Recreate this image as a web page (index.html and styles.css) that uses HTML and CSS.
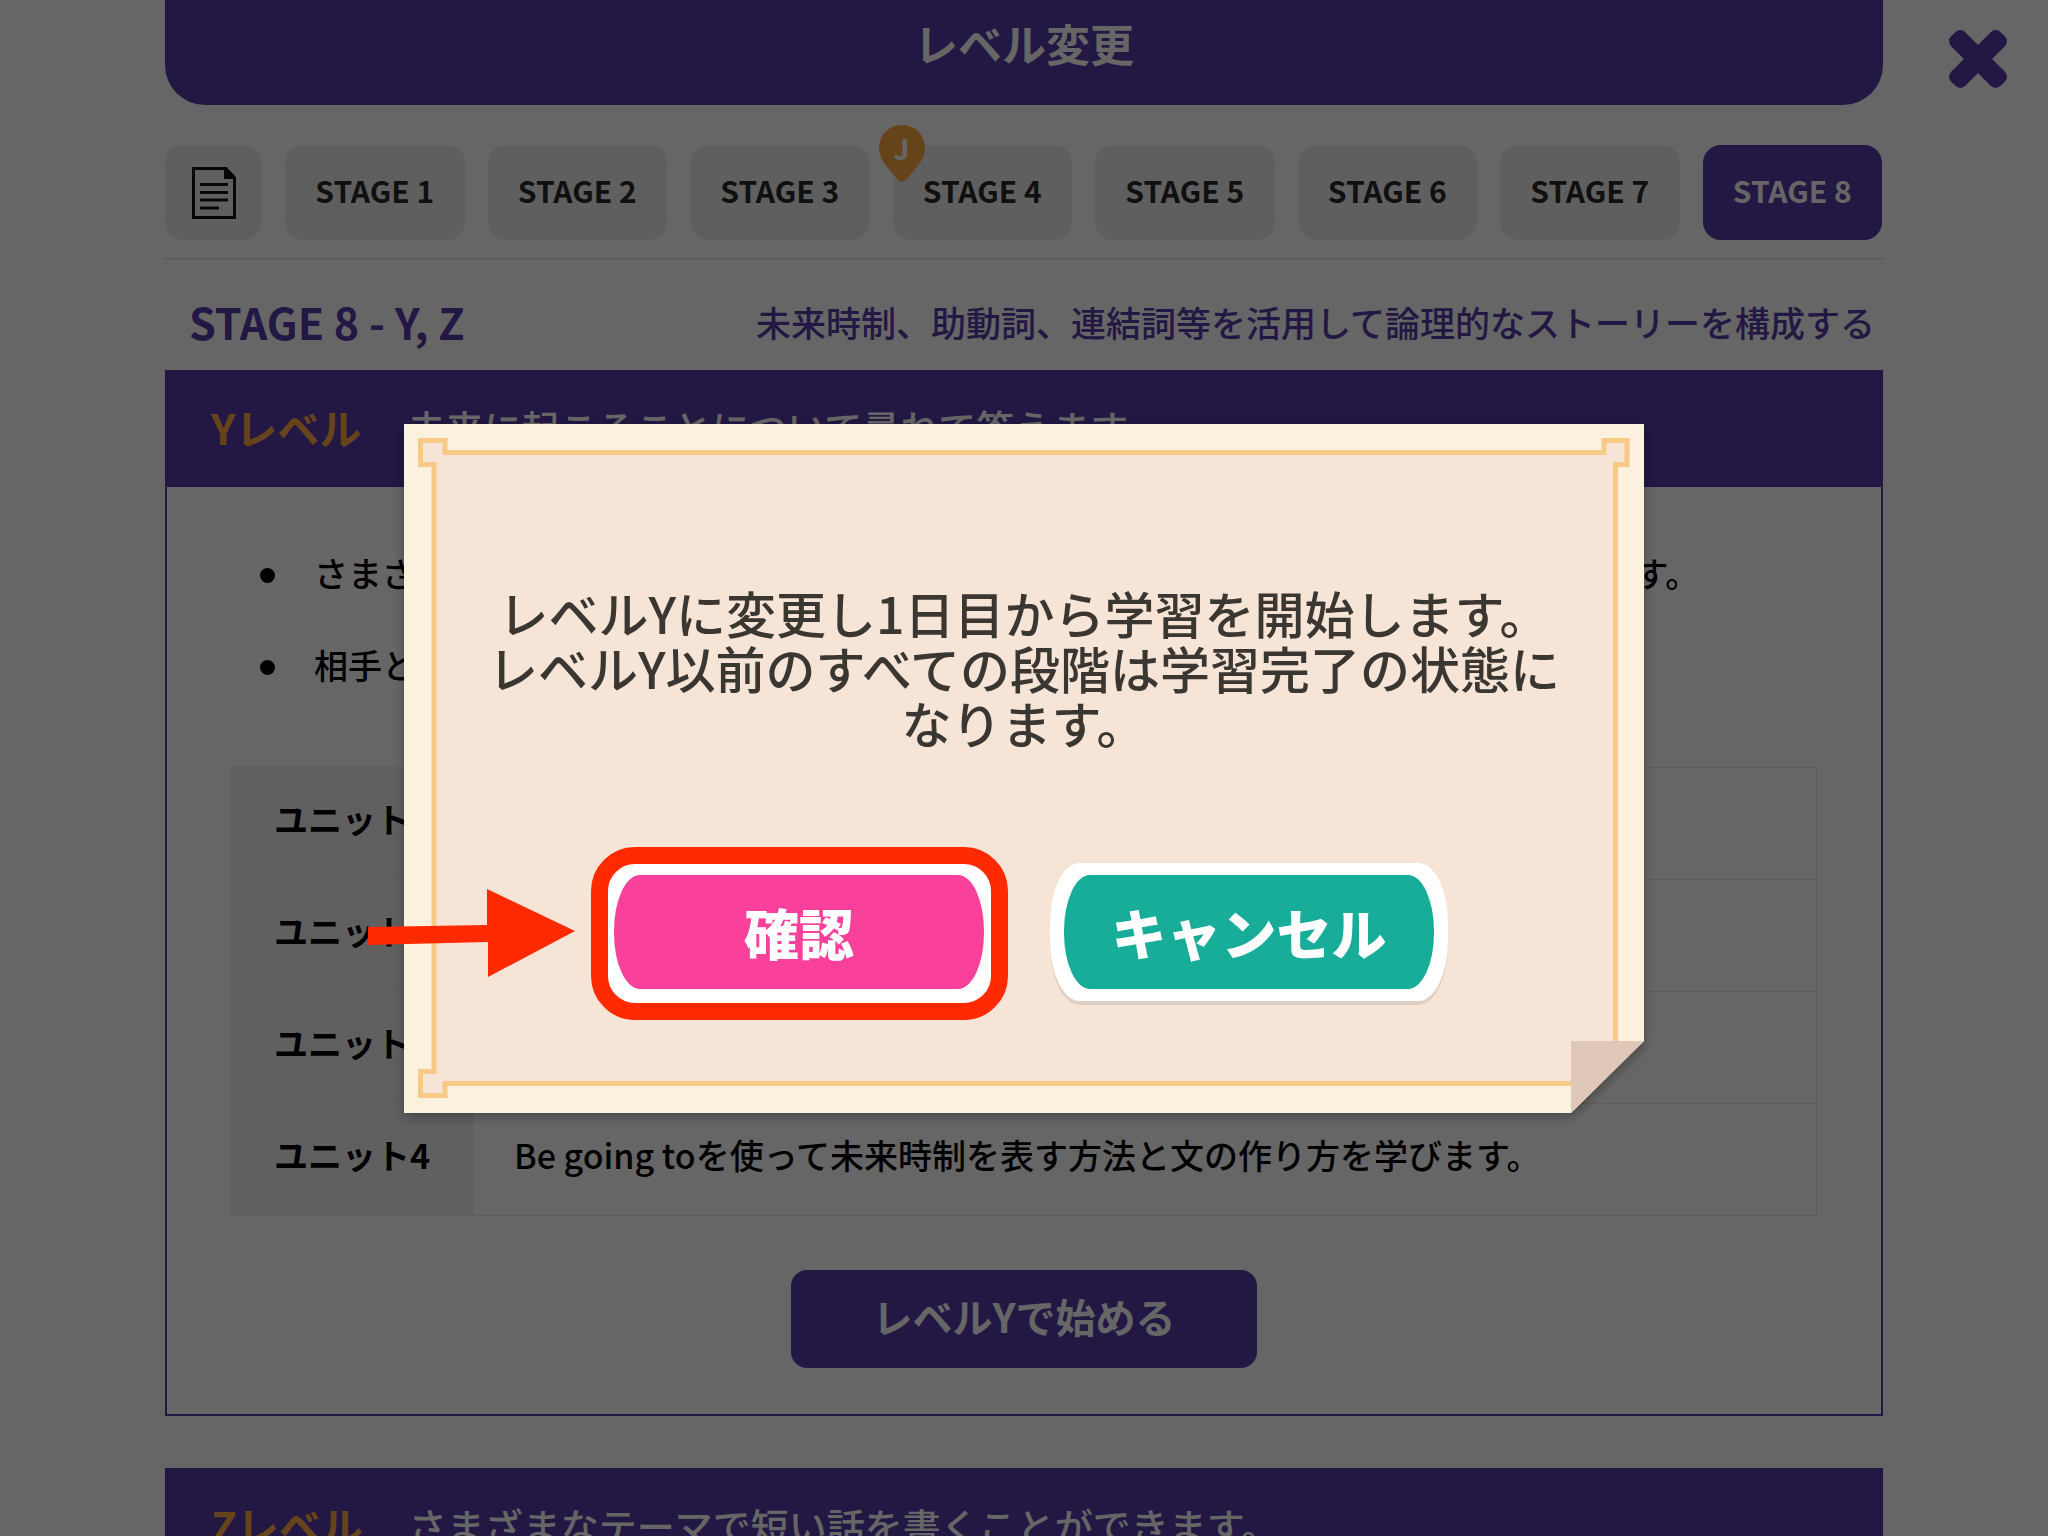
FILE: index.html
```html
<!DOCTYPE html>
<html lang="ja">
<head>
    <meta charset="UTF-8">
    <meta name="viewport" content="width=device-width, initial-scale=1.0">
    <title>レベル変更</title>
    <link rel="stylesheet" href="styles.css">
</head>
<body>
    <header class="top">
        <h1 class="top-title">レベル変更</h1>
        <button class="close" type="button" aria-label="閉じる">
            <svg width="60" height="60" viewBox="0 0 60 60" fill="#553ca8">
                <rect x="-5" y="20" width="70" height="20" rx="7" transform="rotate(45 30 30)"/>
                <rect x="-5" y="20" width="70" height="20" rx="7" transform="rotate(-45 30 30)"/>
            </svg>
        </button>
    </header>

    <main class="content">
        <nav class="tabs">
            <button class="tab tab-doc" type="button" aria-label="一覧">
                <svg width="44" height="52" viewBox="0 0 44 52">
                    <path d="M1.5 1.5H34L42.500 11V50.500H1.500Z" fill="none" stroke="#1a1206" stroke-width="3"/>
                    <path d="M32 1H35L44 10V12H32Z" fill="#1a1206"/>
                    <path d="M8 17.500H36M8 25.500H36M8 33H36M8 41H27" stroke="#1a1206" stroke-width="3"/>
                </svg>
            </button>
            <button class="tab" type="button">STAGE 1</button>
            <button class="tab" type="button">STAGE 2</button>
            <button class="tab" type="button">STAGE 3</button>
            <button class="tab" type="button">
                <span class="pin">
                    <svg width="48" height="58" viewBox="0 0 48 58"><path d="M24 0C37 0 47 10 47 23C47 34 39 42 29 54Q24 60 19 54C9 42 1 34 1 23C1 10 11 0 24 0Z" fill="#ffaa44"/></svg>
                    <span class="pin-text">J</span>
                </span>
                STAGE 4
            </button>
            <button class="tab" type="button">STAGE 5</button>
            <button class="tab" type="button">STAGE 6</button>
            <button class="tab" type="button">STAGE 7</button>
            <button class="tab active" type="button">STAGE 8</button>
        </nav>

        <div class="stage-head">
            <h2 class="stage-title">STAGE 8 - Y, Z</h2>
            <p class="stage-desc">未来時制、助動詞、連結詞等を活用して論理的なストーリーを構成する</p>
        </div>

        <section class="level">
            <div class="level-head">
                <h3 class="level-name">Yレベル</h3>
                <p class="level-desc">未来に起こることについて尋ねて答えます。</p>
            </div>
            <div class="level-body">
                <ul class="goals">
                    <li>さまざまな表現を使って、未来に起こることについて二人で尋ねて答えることができます。</li>
                    <li>相手と予定を話し合うことができます。</li>
                </ul>
                <table class="units">
                    <tr>
                        <th scope="row">ユニット1</th>
                        <td>willを使って未来の表し方を学びます。</td>
                    </tr>
                    <tr>
                        <th scope="row">ユニット2</th>
                        <td>未来のことを尋ねる方法を学びます。</td>
                    </tr>
                    <tr>
                        <th scope="row">ユニット3</th>
                        <td>未来のことを答える方法を学びます。</td>
                    </tr>
                    <tr>
                        <th scope="row">ユニット4</th>
                        <td>Be going toを使って未来時制を表す方法と文の作り方を学びます。</td>
                    </tr>
                </table>
                <button class="start" type="button">レベルYで始める</button>
            </div>
        </section>

        <section class="level">
            <div class="level-head">
                <h3 class="level-name">Zレベル</h3>
                <p class="level-desc">さまざまなテーマで短い話を書くことができます。</p>
            </div>
        </section>
    </main>

    <!-- 確認ダイアログ -->
    <div class="overlay">
        <div class="dialog" role="dialog" aria-modal="true" aria-labelledby="dialog-text">
            <svg class="paper" viewBox="0 0 1240 690" preserveAspectRatio="none">
                <path d="M0 0H1240V618L1167 690H0Z" fill="#fcf0df"/>
                <path d="M1211.500 618V40.500H1223V16.500H1200V28.500H41V16.500H16.500V40.500H30V648.500H16.500V672.500H41V660.500H1167" fill="#f6e4d6" stroke="#f8ca87" stroke-width="5"/>
                <path d="M1167 618H1240L1167 690Z" fill="#e0c8b8"/>
            </svg>
            <p class="dialog-text" id="dialog-text">レベルYに変更し1日目から学習を開始します。<br>レベルY以前のすべての段階は学習完了の状態に<br>なります。</p>
            <div class="dialog-buttons">
                <div class="marked">
                    <button class="choice confirm" type="button"><span>確認</span></button>
                    <span class="ring"></span>
                    <svg class="arrow" width="208" height="88" viewBox="0 0 208 88"><path d="M0 38L119 36V0L207 42L120 88V53L0 56Z" fill="#ff2a00"/></svg>
                </div>
                <button class="choice cancel" type="button"><span>キャンセル</span></button>
            </div>
        </div>
    </div>
</body>
</html>
```
FILE: styles.css
```css
* {
    box-sizing: border-box;
}

body {
    margin: 0;
    height: 100vh;
    overflow: hidden;
    background-color: #fff;
    color: #000;
    font-family: "Noto Sans CJK JP", sans-serif;
    font-weight: 500;
}

h1, h2, h3, p, ul {
    margin: 0;
    padding: 0;
}

button {
    border: none;
    padding: 0;
    font-family: inherit;
    cursor: pointer;
}

.top {
    display: grid;
    grid-template-columns: 1fr 165px;
    padding-left: 165px;
}

.top-title {
    height: 105px;
    padding-top: 11px;
    border-radius: 0 0 40px 40px;
    background-color: #553ca8;
    color: #fff;
    font-size: 44px;
    font-weight: 700;
    line-height: 64px;
    text-align: center;
}

.close {
    justify-self: center;
    height: 60px;
    margin: 29px 0 0 24px;
    background: none;
}

.close svg {
    display: block;
}

.content {
    padding: 40px 165px 0;
}

.tabs {
    display: flex;
    gap: 23px;
    padding: 0 1px 18px 0;
    border-bottom: 2px solid #e4e4e4;
}

.tab {
    position: relative;
    flex: 1;
    height: 95px;
    padding-bottom: 5px;
    border-radius: 18px;
    background-color: #eee;
    color: #2a2a2a;
    font-size: 30px;
    font-weight: 700;
}

.tab-doc {
    flex: 0 0 97px;
    padding-bottom: 0;
}

.tab-doc svg {
    display: block;
    margin: 0 auto;
}

.tab.active {
    background-color: #553ca8;
    color: #fff;
}

.pin {
    position: absolute;
    top: -20px;
    left: -15px;
    width: 48px;
    height: 58px;
}

.pin-text {
    position: absolute;
    top: 0;
    left: 0;
    width: 48px;
    color: #fff;
    font-size: 28px;
    line-height: 46px;
    text-align: center;
}

.stage-head {
    display: flex;
    justify-content: space-between;
    align-items: center;
    height: 110px;
    padding: 12px 8px 0 24px;
    color: #553ca8;
}

.stage-title {
    font-size: 43px;
    font-weight: 700;
    line-height: 64px;
}

.stage-desc {
    font-size: 35px;
}

.level {
    margin-bottom: 52px;
    border: 2px solid #553ca8;
}

.level-head {
    display: flex;
    align-items: center;
    gap: 46px;
    height: 115px;
    padding: 0 44px 6px;
    background-color: #553ca8;
    color: #fff;
}

.level-name {
    color: #ffaa44;
    font-size: 42px;
    font-weight: 700;
}

.level-desc {
    font-size: 38px;
}

.level-body {
    padding: 40px 64px 46px;
}

.goals {
    list-style: none;
    margin-bottom: 56px;
    font-size: 34px;
    line-height: 92px;
}

.goals li {
    display: flex;
    align-items: center;
    gap: 39px;
    padding-left: 29px;
}

.goals li::before {
    content: "";
    width: 15px;
    height: 15px;
    margin-top: 4px;
    border-radius: 50%;
    background-color: #000;
}

.units {
    width: 100%;
    border-collapse: collapse;
    font-size: 34px;
    line-height: 50px;
    text-align: left;
}

.units th,
.units td {
    padding: 26px 40px 35px;
    border: 1px solid #e8e8e8;
}

.units th {
    width: 242px;
    padding: 26px 0 35px 42px;
    border-color: #eee;
    background-color: #f0f0f0;
    font-weight: 700;
}

.start {
    display: block;
    width: 466px;
    height: 98px;
    margin: 54px auto 0;
    padding-bottom: 6px;
    border-radius: 16px;
    background-color: #553ca8;
    color: #fff;
    font-size: 40px;
    font-weight: 700;
}

.overlay {
    position: fixed;
    inset: 0;
    display: flex;
    align-items: center;
    justify-content: center;
    background-color: rgba(0, 0, 0, 0.6);
}

.dialog {
    position: relative;
    width: 1240px;
    padding: 161px 60px 112px;
}

.paper {
    position: absolute;
    inset: 0;
    width: 100%;
    height: 100%;
    filter: drop-shadow(0 4px 6px rgba(0, 0, 0, 0.3));
}

.dialog-text {
    position: relative;
    color: #3a3632;
    font-size: 50px;
    font-weight: 500;
    line-height: 55px;
    text-align: center;
}

.dialog-buttons {
    position: relative;
    display: flex;
    justify-content: center;
    gap: 52px;
    margin-top: 113px;
}

.marked {
    position: relative;
}

.choice {
    display: flex;
    width: 398px;
    height: 138px;
    padding: 12px 14px;
    border-radius: 30px / 60px;
    background-color: #fff;
    box-shadow: 0 4px 0 #e0d0c3;
    color: #fff;
    font-size: 55px;
    font-weight: 900;
}

.choice span {
    flex: 1;
    border-radius: 26px / 56px;
    line-height: 112px;
}

.confirm {
    border-radius: 16px;
    box-shadow: 0 4px 0 #fff;
}

.confirm span {
    background-color: #f9419b;
}

.cancel span {
    background-color: #17ad99;
}

.ring {
    position: absolute;
    inset: -16px -10px -19px -9px;
    border: 17px solid #ff2a00;
    border-radius: 44px;
}

.arrow {
    position: absolute;
    top: 26px;
    left: -232px;
}
```
